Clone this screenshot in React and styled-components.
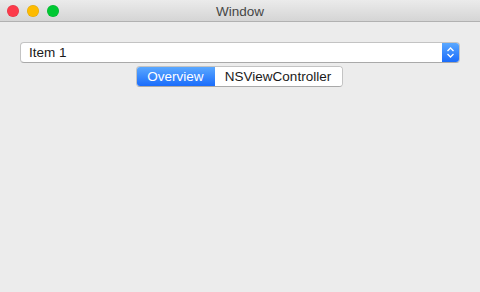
import React from 'react'
import styled, { createGlobalStyle } from 'styled-components'

const GlobalStyle = createGlobalStyle`
    html, body {
        margin: 0;
        padding: 0;
        background: #ececec;
    }
    body {
        font-family: "Liberation Sans", Arial, sans-serif;
        font-size: 13.5px;
        -webkit-font-smoothing: antialiased;
    }
`

const Window = styled.div`
    width: 480px;
    height: 292px;
    display: flex;
    flex-direction: column;
    background: #ececec;
    overflow: hidden;
`

const TitleBar = styled.div`
    position: relative;
    height: 21px;
    flex-shrink: 0;
    display: flex;
    align-items: center;
    justify-content: center;
    background: linear-gradient(#ebebeb, #d5d5d5);
    border-bottom: 1px solid #b1b1b1;
`

const Lights = styled.div`
    position: absolute;
    left: 7px;
    top: 5px;
    display: flex;
    gap: 8px;
`

const Light = styled.span`
    width: 12px;
    height: 12px;
    border-radius: 50%;
    background: ${props => props.color};
    box-shadow: inset 0 0 0 0.5px rgba(0, 0, 0, 0.12);
`

const Title = styled.div`
    color: #464646;
    font-size: 13.5px;
    padding-top: 1px;
`

const Content = styled.div`
    display: flex;
    flex-direction: column;
    align-items: center;
    padding: 20px 20px 0;
    gap: 3px;
`

const Popup = styled.div`
    align-self: stretch;
    height: 21px;
    box-sizing: border-box;
    display: flex;
    background: #fff;
    border: 1px solid #c3c3c3;
    border-bottom-color: #a9a9a9;
    border-radius: 4px;
    overflow: hidden;
`

const PopupLabel = styled.div`
    flex: 1;
    padding-left: 8px;
    line-height: 19px;
    color: #1a1a1a;
`

const Stepper = styled.div`
    width: 17px;
    display: flex;
    align-items: center;
    justify-content: center;
    background: linear-gradient(#5aa8ff, #1a6cfb);
`

const Segmented = styled.div`
    display: flex;
    height: 21px;
    box-sizing: border-box;
    border: 1px solid #c3c3c3;
    border-bottom-color: #a9a9a9;
    border-radius: 4px;
    overflow: hidden;
    background: #fff;
    margin-left: -2px;
`

const Segment = styled.div`
    width: ${props => props.width}px;
    text-align: center;
    line-height: 19px;
    color: ${props => props.active ? '#fff' : '#1a1a1a'};
    background: ${props => props.active ? 'linear-gradient(#5aa8ff, #1a6cfb)' : '#fff'};
`

const Chevrons = () => (
    <svg width="9" height="13" viewBox="0 0 9 13">
        <path d="M1.5 5 L4.5 2 L7.5 5 M1.5 8 L4.5 11 L7.5 8" fill="none" stroke="#fff" strokeWidth="1.3" />
    </svg>
)

export default function App() {
    return (
        <Window>
            <GlobalStyle />
            <TitleBar>
                <Lights>
                    <Light color="#fc3a4a" />
                    <Light color="#fdbb00" />
                    <Light color="#00c832" />
                </Lights>
                <Title>Window</Title>
            </TitleBar>
            <Content>
                <Popup>
                    <PopupLabel>Item 1</PopupLabel>
                    <Stepper><Chevrons /></Stepper>
                </Popup>
                <Segmented>
                    <Segment active width={78}>Overview</Segment>
                    <Segment width={127}>NSViewController</Segment>
                </Segmented>
            </Content>
        </Window>
    )
}
